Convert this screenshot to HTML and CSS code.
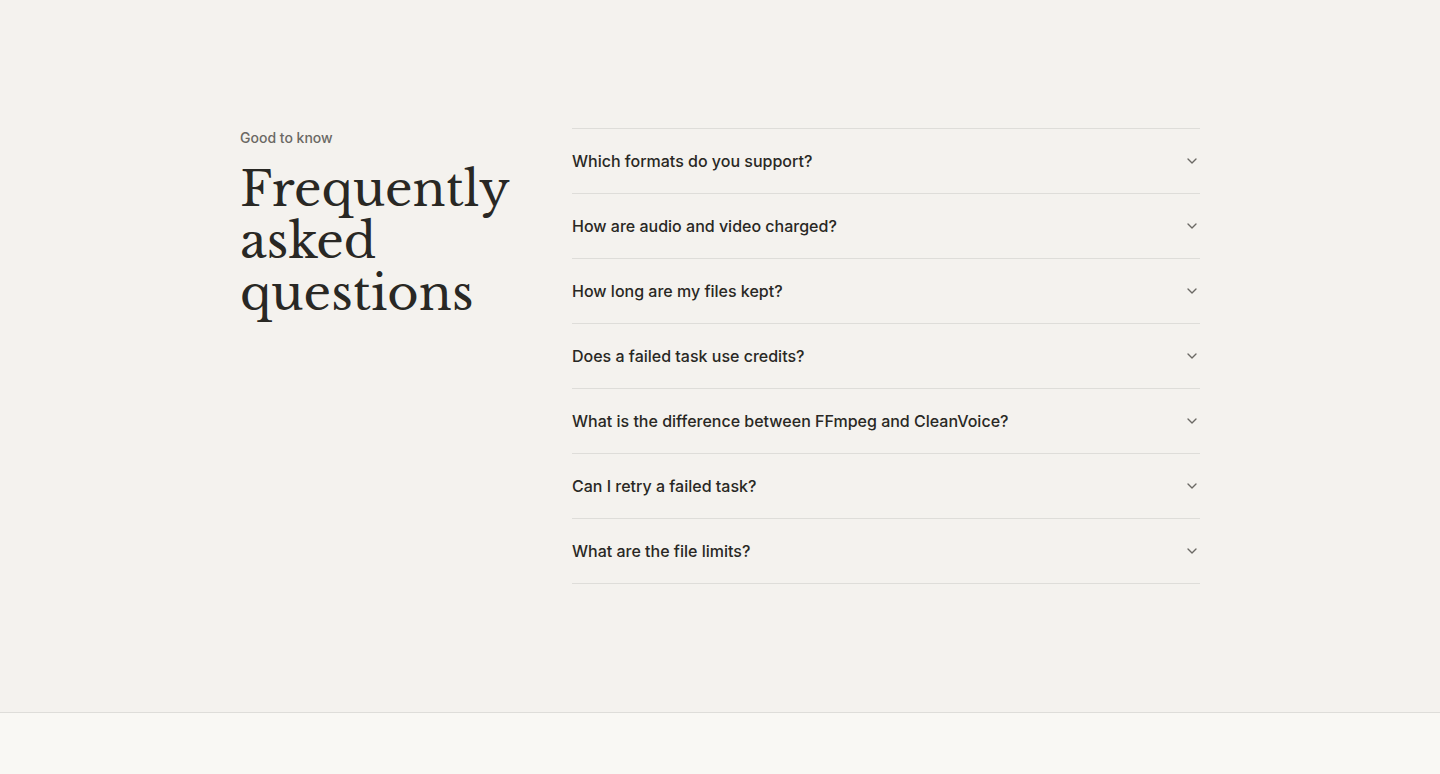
FILE: index.html
```html
<!DOCTYPE html>
<html lang="en">
  <head>
    <meta charset="UTF-8" />
    <meta name="viewport" content="width=device-width, initial-scale=1.0" />
    <title>Frequently asked questions</title>
    <link rel="stylesheet" href="styles.css">
  </head>
  <body>
    <section class="faq">
      <div class="container">
        <div class="heading">
          <p class="label">Good to know</p>
          <h2>Frequently asked questions</h2>
        </div>
        <ul class="list">
          <li>
            <button type="button" class="question">
              Which formats do you support?
              <svg class="chevron" viewBox="0 0 24 24"><path d="m6 9 6 6 6-6" /></svg>
            </button>
          </li>
          <li>
            <button type="button" class="question">
              How are audio and video charged?
              <svg class="chevron" viewBox="0 0 24 24"><path d="m6 9 6 6 6-6" /></svg>
            </button>
          </li>
          <li>
            <button type="button" class="question">
              How long are my files kept?
              <svg class="chevron" viewBox="0 0 24 24"><path d="m6 9 6 6 6-6" /></svg>
            </button>
          </li>
          <li>
            <button type="button" class="question">
              Does a failed task use credits?
              <svg class="chevron" viewBox="0 0 24 24"><path d="m6 9 6 6 6-6" /></svg>
            </button>
          </li>
          <li>
            <button type="button" class="question">
              What is the difference between FFmpeg and CleanVoice?
              <svg class="chevron" viewBox="0 0 24 24"><path d="m6 9 6 6 6-6" /></svg>
            </button>
          </li>
          <li>
            <button type="button" class="question">
              Can I retry a failed task?
              <svg class="chevron" viewBox="0 0 24 24"><path d="m6 9 6 6 6-6" /></svg>
            </button>
          </li>
          <li>
            <button type="button" class="question">
              What are the file limits?
              <svg class="chevron" viewBox="0 0 24 24"><path d="m6 9 6 6 6-6" /></svg>
            </button>
          </li>
        </ul>
      </div>
    </section>
  </body>
</html>
```
FILE: styles.css
```css
* { box-sizing: border-box }
body {
  margin: 0;
  background: #f9f8f4;
  color: #292824;
  font-family: Inter, sans-serif;
}
.faq {
  padding: 128px 24px;
  background: #f4f2ee;
  border-bottom: 1px solid #deddd9;
}
.container {
  display: grid;
  grid-template-columns: minmax(0, 268px) minmax(0, 1fr);
  gap: 64px;
  max-width: 960px;
  margin: 0 auto;
}
.label {
  margin: 0 0 15px;
  color: #6b6964;
  font-size: 14px;
  font-weight: 500;
  line-height: 20px;
}
h2 {
  margin: 0;
  font-family: "Libre Baskerville", "Liberation Serif", serif;
  font-size: 48px;
  font-weight: 400;
  line-height: 52px;
}
.list {
  margin: 0;
  padding: 0;
  list-style: none;
  border-top: 1px solid #deddd9;
}
.list li { border-bottom: 1px solid #deddd9 }
.question {
  display: flex;
  align-items: center;
  justify-content: space-between;
  gap: 24px;
  width: 100%;
  padding: 20px 0;
  border: none;
  background: none;
  color: inherit;
  font-family: inherit;
  font-size: 16px;
  font-weight: 500;
  line-height: 24px;
  text-align: left;
  cursor: pointer;
}
.chevron {
  flex: none;
  width: 16px;
  height: 16px;
  fill: none;
  stroke: #6b6964;
  stroke-width: 2;
  stroke-linecap: round;
  stroke-linejoin: round;
}
@media screen and (max-width: 768px) {
  .container { grid-template-columns: 1fr }
}
```
